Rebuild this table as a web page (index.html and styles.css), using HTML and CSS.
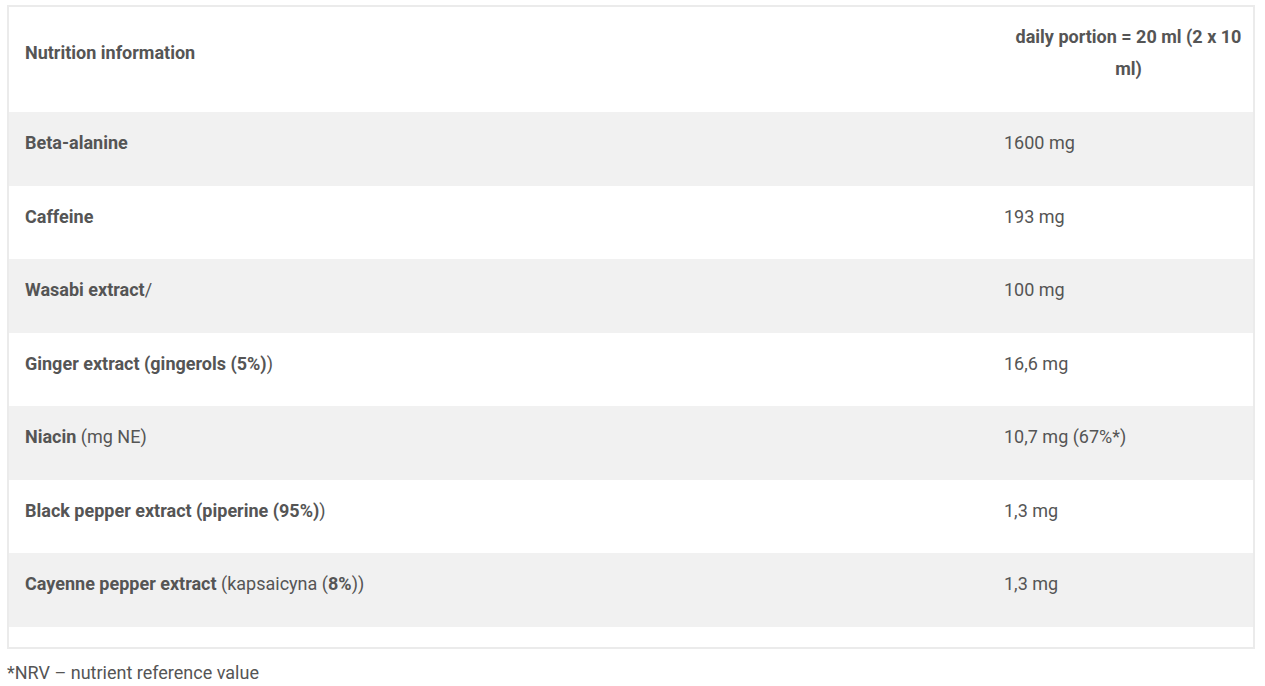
FILE: index.html
```html
<!DOCTYPE html>
<html>
<head>
<meta charset="utf-8">
<link rel="stylesheet" href="styles.css">
</head>
<body>
<div class="page">
  <table class="nutri">
    <thead>
      <tr>
        <th class="name-col">Nutrition information</th>
        <th class="val-col">daily portion = 20 ml (2 x 10 ml)</th>
      </tr>
    </thead>
    <tbody>
      <tr class="odd"><td><b>Beta-alanine</b></td><td>1600 mg</td></tr>
      <tr><td><b>Caffeine</b></td><td>193 mg</td></tr>
      <tr class="odd"><td><b>Wasabi extract</b>/</td><td>100 mg</td></tr>
      <tr><td><b>Ginger extract (gingerols (5%)</b>)</td><td>16,6 mg</td></tr>
      <tr class="odd"><td><b>Niacin</b> (mg NE)</td><td>10,7 mg (67%*)</td></tr>
      <tr><td><b>Black pepper extract (piperine (95%)</b>)</td><td>1,3 mg</td></tr>
      <tr class="odd"><td><b>Cayenne pepper extract</b> (kapsaicyna (<b>8%</b>))</td><td>1,3 mg</td></tr>
      <tr class="empty"><td></td><td></td></tr>
    </tbody>
  </table>
  <p class="note">*NRV – nutrient reference value</p>
</div>
</body>
</html>
```
FILE: styles.css
```css
html, body {
  margin: 0;
  padding: 0;
  background: #fff;
}
body {
  font-family: Roboto, "Liberation Sans", Arial, sans-serif;
  font-size: 18px;
  color: #555;
}
.page {
  padding: 5px 10px 0 7px;
}
.nutri {
  width: 1248px;
  border: 2px solid #ebebeb;
  border-collapse: separate;
  border-spacing: 0;
  table-layout: fixed;
}
.nutri th {
  font-weight: 700;
  line-height: 32px;
  vertical-align: middle;
  padding: 14px 16px 27px;
  height: 64px;
}
.nutri th.name-col {
  text-align: left;
  width: 947px;
}
.nutri th.val-col {
  text-align: center;
  padding-right: 0;
}
.nutri td {
  line-height: 28px;
  padding: 17px 16px 28.5px;
  vertical-align: top;
}
.nutri b {
  font-weight: 700;
}
.nutri tr.odd td {
  background: #f1f1f1;
}
.nutri tr.empty td {
  padding: 0;
  height: 20px;
}
.note {
  margin: 10px 0 0;
  line-height: 28px;
}
```
